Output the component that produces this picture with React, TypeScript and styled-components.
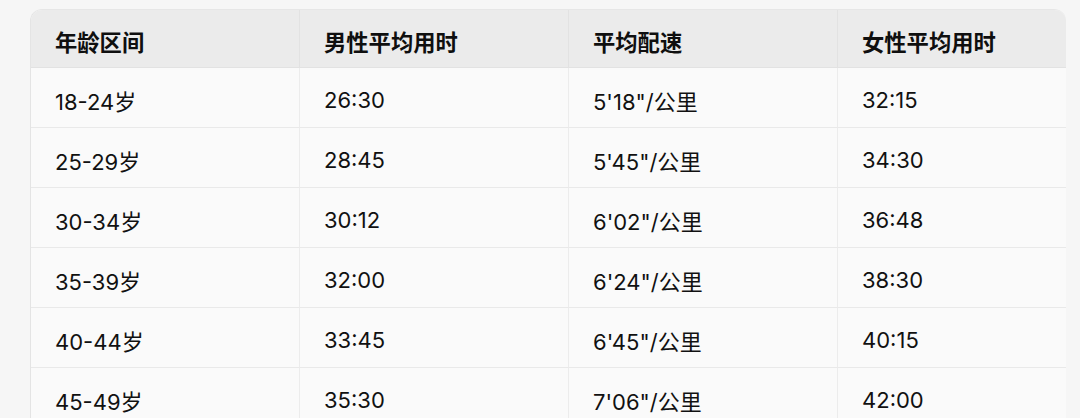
import React from "react";
import styled, { createGlobalStyle } from "styled-components";

const GlobalStyle = createGlobalStyle`
  html, body {
    margin: 0;
    padding: 0;
    background: #f6f6f6;
    overflow: hidden;
  }
  body {
    font-family: Inter, "Noto Sans CJK SC", "Noto Sans", sans-serif;
    color: #141414;
  }
`;

const Page = styled.div`
  width: 1080px;
  height: 418px;
  padding: 9px 0 0 30px;
  box-sizing: border-box;
  overflow: hidden;
`;

const Table = styled.table`
  width: 1036px;
  table-layout: fixed;
  border-collapse: separate;
  border-spacing: 0;
  background: #fafafa;
  border-left: 1px solid #e4e4e4;
  border-top: 1px solid #e6e6e6;
  border-top-left-radius: 12px;
  border-top-right-radius: 12px;
  overflow: hidden;
`;

const Col = styled.col<{ $width?: number }>`
  width: ${(p) => (p.$width ? `${p.$width}px` : "auto")};
`;

const HeadCell = styled.th<{ $last?: boolean }>`
  height: 58px;
  padding: 4px 24px 0;
  box-sizing: border-box;
  text-align: left;
  font-size: 22.3px;
  font-weight: 700;
  color: #0f0f0f;
  background: #ebebeb;
  border-bottom: 1px solid #e2e2e2;
  border-right: ${(p) => (p.$last ? "none" : "1px solid #e2e2e2")};
  white-space: nowrap;
`;

const BodyCell = styled.td<{ $last?: boolean }>`
  height: 60px;
  padding: 4px 24px 0;
  box-sizing: border-box;
  font-size: 22px;
  font-weight: 400;
  color: #111111;
  border-bottom: 1px solid #e9e9e9;
  border-right: ${(p) => (p.$last ? "none" : "1px solid #ececec")};
  white-space: nowrap;
`;

const headers = ["年龄区间", "男性平均用时", "平均配速", "女性平均用时"];
const widths = [269, 269, 269, 0];

const rows: string[][] = [
  ["18-24岁", "26:30", "5'18\"/公里", "32:15"],
  ["25-29岁", "28:45", "5'45\"/公里", "34:30"],
  ["30-34岁", "30:12", "6'02\"/公里", "36:48"],
  ["35-39岁", "32:00", "6'24\"/公里", "38:30"],
  ["40-44岁", "33:45", "6'45\"/公里", "40:15"],
  ["45-49岁", "35:30", "7'06\"/公里", "42:00"],
];

export default function App() {
  return (
    <>
      <GlobalStyle />
      <Page>
        <Table>
          <colgroup>
            {widths.map((w, i) => (
              <Col key={i} $width={w} />
            ))}
          </colgroup>
          <thead>
            <tr>
              {headers.map((h, i) => (
                <HeadCell key={h} $last={i === headers.length - 1}>
                  {h}
                </HeadCell>
              ))}
            </tr>
          </thead>
          <tbody>
            {rows.map((r) => (
              <tr key={r[0]}>
                {r.map((c, i) => (
                  <BodyCell key={i} $last={i === r.length - 1}>
                    {c}
                  </BodyCell>
                ))}
              </tr>
            ))}
          </tbody>
        </Table>
      </Page>
    </>
  );
}
